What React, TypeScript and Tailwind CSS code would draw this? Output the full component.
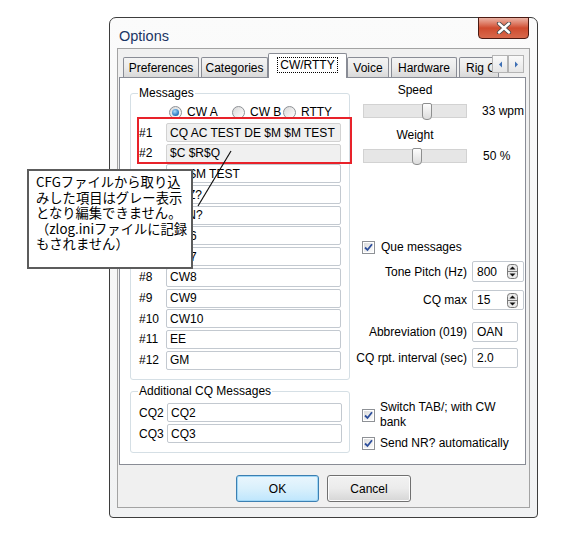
import React from "react";

const ui = "font-['Liberation_Sans',Arial,sans-serif]";
const jp = "font-['Noto_Sans_CJK_JP','Noto_Sans_CJK_SC',sans-serif]";

const messages = [
  "TU $M TEST",
  "QRZ?",
  "AGN?",
  "CW6",
  "CW7",
  "CW8",
  "CW9",
  "CW10",
  "EE",
  "GM",
];

function Tab({ label, w }: { label: string; w: string }) {
  return (
    <div
      className={`${w} h-[20px] shrink-0 border border-b-0 border-[#898c95] rounded-t-[2px] bg-gradient-to-b from-[#f4f4f4] via-[#ebebeb] to-[#d9d9d9] flex items-center justify-center leading-[14px] overflow-hidden whitespace-nowrap`}
    >
      {label}
    </div>
  );
}

function Field({ value, disabled }: { value: string; disabled?: boolean }) {
  return (
    <div
      className={`w-[175px] h-[19px] rounded-[2px] border pl-[3px] flex items-center leading-[14px] whitespace-nowrap overflow-hidden ${
        disabled ? "bg-[#f0f0f0] border-[#d2d2d2]" : "bg-white border-[#c3c9d0]"
      }`}
    >
      {value}
    </div>
  );
}

function MsgRow({ n, value, disabled }: { n: number; value: string; disabled?: boolean }) {
  return (
    <div className="flex items-center h-[19px]">
      <span className="w-[27px] leading-[14px]">#{n}</span>
      <Field value={value} disabled={disabled} />
    </div>
  );
}

function Radio({ checked, label, w }: { checked?: boolean; label: string; w: string }) {
  return (
    <div className={`${w} flex items-center gap-[5px] h-[14px]`}>
      <div className="w-[13px] h-[13px] rounded-full border border-[#8e9196] bg-gradient-to-br from-[#d9d9d9] to-[#ffffff] flex items-center justify-center">
        {checked && (
          <div className="w-[7px] h-[7px] rounded-full bg-[radial-gradient(circle_at_40%_35%,#a9dcfb,#2a78c0_65%,#17518c)]" />
        )}
      </div>
      <span className="leading-[14px]">{label}</span>
    </div>
  );
}

function Check() {
  return (
    <div className="w-[13px] h-[13px] shrink-0 border border-[#8e9196] bg-white p-[1px]">
      <div className="w-full h-full bg-gradient-to-br from-[#dcdcdc] to-[#fbfbfb] flex items-center justify-center">
        <svg width="9" height="9" viewBox="0 0 9 9">
          <path d="M1 4.5 L3.5 7 L8 1.2" fill="none" stroke="#2e4f9c" strokeWidth="1.8" />
        </svg>
      </div>
    </div>
  );
}

function Spin() {
  return (
    <svg width="11" height="15" viewBox="0 0 11 15">
      <rect x="0.5" y="0.5" width="10" height="14" rx="3" fill="#e9e9e9" stroke="#7a7a7a" />
      <line x1="1" y1="7.5" x2="10" y2="7.5" stroke="#7a7a7a" />
      <path d="M5.5 2.5 L8.5 5.5 L2.5 5.5 Z" fill="#111" />
      <path d="M2.5 9.5 L8.5 9.5 L5.5 12.5 Z" fill="#111" />
    </svg>
  );
}

function Slider({ thumb }: { thumb: string }) {
  return (
    <div className="relative ml-[7px] w-[104px] h-[14px] bg-[#e6e6e6] border border-[#d2d2d2]">
      <div
        className={`absolute ${thumb} -top-[2px] w-[10px] h-[17px] rounded-b-[4px] rounded-t-[2px] border border-[#8e8f8f] bg-gradient-to-b from-[#fdfdfd] to-[#dcdcdc]`}
      />
    </div>
  );
}

function LabeledInput({
  label,
  value,
  w,
  h,
  spin,
}: {
  label: string;
  value: string;
  w: string;
  h: string;
  spin?: boolean;
}) {
  return (
    <div className="flex items-center">
      <span className="w-[111px] text-right leading-[14px] whitespace-nowrap">{label}</span>
      <div
        className={`ml-[5px] ${w} ${h} bg-white border border-[#c3c9d0] rounded-[2px] pl-[4px] pr-[5px] flex items-center justify-between leading-[14px]`}
      >
        <span>{value}</span>
        {spin && <Spin />}
      </div>
    </div>
  );
}

function Window() {
  return (
    <div className="w-[429px] h-[501px] border border-[#3d3d3d] rounded-t-[7px] rounded-b-[4px] bg-gradient-to-b from-[#fbfbfb] to-[#f1f2f3] px-[7px] pb-[9px] flex flex-col">
      {/* Title bar */}
      <div className="h-[30px] flex items-start justify-between">
        <span className="mt-[10px] ml-[2px] text-[14.5px] leading-[17px] text-[#1b3565]">Options</span>
        <div className="-mt-[1px] mr-[1px] w-[51px] h-[22px] rounded-b-[4px] border border-[#4a1a12] bg-gradient-to-b from-[#eab2a4] via-[#cf4b2e] to-[#d8694c] flex items-center justify-center">
          <svg width="16" height="12" viewBox="0 0 16 12">
            <path d="M3 1.5 L13 10.5 M13 1.5 L3 10.5" stroke="#4b4b4b" strokeWidth="4.2" strokeLinecap="round" />
            <path d="M3 1.5 L13 10.5 M13 1.5 L3 10.5" stroke="#ffffff" strokeWidth="2.4" strokeLinecap="round" />
          </svg>
        </div>
      </div>

      {/* Client area */}
      <div className="h-[460px] border border-[#a3a3a3] bg-[#f0f0f0] flex flex-col">
        <div className="ml-[1px] mr-[3px] mt-[4px]">
          {/* Tabs */}
          <div className="relative z-10 h-[24px] flex items-end gap-[2px] pl-[4px]">
            <Tab label="Preferences" w="w-[76px]" />
            <Tab label="Categories" w="w-[67px]" />
            <div className="-mx-[2px] -mb-px w-[79px] h-[25px] shrink-0 border border-b-0 border-[#898c95] rounded-t-[2px] bg-white flex items-start justify-center pt-[4px]">
              <span className="px-[2px] leading-[14px] outline-1 outline-dotted outline-black">CW/RTTY</span>
            </div>
            <Tab label="Voice" w="w-[42px]" />
            <Tab label="Hardware" w="w-[66px]" />
            <div className="w-[40px] h-[20px] shrink-0 border border-b-0 border-[#898c95] rounded-t-[2px] bg-gradient-to-b from-[#f4f4f4] via-[#ebebeb] to-[#d9d9d9] flex items-center pl-[6px] leading-[14px] overflow-hidden whitespace-nowrap">
              Rig Control
            </div>
            <div className="absolute right-0 top-[2px] flex pr-[2px] bg-[#f0f0f0]">
              {[true, false].map((left) => (
                <div
                  key={String(left)}
                  className="w-[16px] h-[18px] border border-[#b4b4b4] bg-gradient-to-b from-[#fafafa] to-[#e6e6e6] flex items-center justify-center"
                >
                  <svg width="5" height="7" viewBox="0 0 5 7">
                    <path d={left ? "M4 0.5 L1 3.5 L4 6.5 Z" : "M1 0.5 L4 3.5 L1 6.5 Z"} fill="#3d6fb4" />
                  </svg>
                </div>
              ))}
            </div>
          </div>

          {/* Panel */}
          <div className="h-[388px] border border-[#898c95] bg-white flex">
            {/* Left column */}
            <div className="pl-[10px] pt-[8px] w-[230px] shrink-0 flex flex-col">
              <fieldset className="w-[220px] h-[294px] border border-[#d5dfe5] rounded-[3px] pl-[8px]">
                <legend className="-ml-[1px] px-[1px] leading-[14px]">Messages</legend>
                <div className="mt-[5px] ml-[30px] flex">
                  <Radio checked label="CW A" w="w-[63px]" />
                  <Radio label="CW B" w="w-[51px]" />
                  <Radio label="RTTY" w="w-[55px]" />
                </div>
                <div className="mt-[4px] flex flex-col gap-[1.7px]">
                  <div className="relative flex flex-col gap-[1.7px]">
                    <MsgRow n={1} value="CQ AC TEST DE $M $M TEST" disabled />
                    <MsgRow n={2} value="$C $R$Q" disabled />
                    <div className="absolute -left-[2px] -top-[6px] -right-[3px] -bottom-[1.5px] border-2 border-[#e8222a]" />
                  </div>
                  {messages.map((m, i) => (
                    <MsgRow key={i} n={i + 3} value={m} />
                  ))}
                </div>
              </fieldset>

              <fieldset className="mt-[4px] w-[220px] h-[69px] border border-[#d5dfe5] rounded-[3px] pl-[8px]">
                <legend className="-ml-[1px] px-[1px] leading-[14px]">Additional CQ Messages</legend>
                <div className="mt-[5px] flex flex-col gap-[2px]">
                  {["CQ2", "CQ3"].map((c) => (
                    <div key={c} className="flex items-center h-[19px]">
                      <span className="w-[28px] leading-[14px]">{c}</span>
                      <Field value={c} />
                    </div>
                  ))}
                </div>
              </fieldset>
            </div>

            {/* Right column */}
            <div className="pl-[6px] flex-1 flex flex-col">
              <div className="mt-[5px] ml-[7px] w-[104px] text-center leading-[14px]">Speed</div>
              <div className="mt-[5px] h-[17px] flex items-center">
                <Slider thumb="left-[58px]" />
                <span className="ml-[15px] leading-[14px]">33 wpm</span>
              </div>
              <div className="mt-[9px] ml-[7px] w-[104px] text-center leading-[14px]">Weight</div>
              <div className="mt-[5px] h-[17px] flex items-center">
                <Slider thumb="left-[48px]" />
                <span className="ml-[16px] leading-[14px]">50 %</span>
              </div>

              <div className="mt-[76px] ml-[6px] h-[14px] flex items-center gap-[6px]">
                <Check />
                <span className="leading-[14px]">Que messages</span>
              </div>

              <div className="mt-[7px] flex flex-col">
                <LabeledInput label="Tone Pitch (Hz)" value="800" w="w-[52px]" h="h-[21px]" spin />
                <div className="mt-[8px]">
                  <LabeledInput label="CQ max" value="15" w="w-[52px]" h="h-[20px]" spin />
                </div>
                <div className="mt-[12px]">
                  <LabeledInput label="Abbreviation (019)" value="OAN" w="w-[46px]" h="h-[20px]" />
                </div>
                <div className="mt-[6px]">
                  <LabeledInput label="CQ rpt. interval (sec)" value="2.0" w="w-[46px]" h="h-[20px]" />
                </div>
              </div>

              <div className="mt-[32px] ml-[6px] flex items-center gap-[5px]">
                <Check />
                <span className="w-[132px] leading-[15px]">Switch TAB/; with CW bank</span>
              </div>
              <div className="mt-[6px] ml-[6px] h-[15px] flex items-center gap-[5px]">
                <Check />
                <span className="leading-[15px] whitespace-nowrap">Send NR? automatically</span>
              </div>
            </div>
          </div>
        </div>

        {/* Buttons */}
        <div className="mt-[10px] flex justify-center gap-[8px]">
          <div className="w-[83px] h-[27px] rounded-[3px] border border-[#3c7fb1] bg-gradient-to-b from-[#eaf6fd] via-[#d9f0fc] to-[#bee6fd] shadow-[inset_0_0_0_1px_#9fd7f7] flex items-center justify-center leading-[14px]">
            OK
          </div>
          <div className="w-[84px] h-[27px] rounded-[3px] border border-[#707070] bg-gradient-to-b from-[#f2f2f2] via-[#ebebeb] to-[#d6d6d6] shadow-[inset_0_0_0_1px_#fcfcfc] flex items-center justify-center leading-[14px]">
            Cancel
          </div>
        </div>
      </div>
    </div>
  );
}

export default function App() {
  return (
    <div className={`relative w-[583px] h-[546px] bg-white overflow-hidden ${ui} text-[12px] text-black`}>
      <div className="pt-[17px] pl-[109px]">
        <Window />
      </div>

      {/* annotation */}
      <svg className="absolute left-0 top-0 pointer-events-none" width="583" height="546">
        <line x1="231" y1="151" x2="198" y2="206" stroke="#111" strokeWidth="1.2" />
      </svg>
      <div
        className={`absolute left-[27px] top-[169px] w-[166px] h-[100px] bg-white border-2 border-[#5c5c5c] pl-[7px] pt-[3px] ${jp} text-[13.3px] leading-[15.5px] text-black`}
      >
        <div>CFGファイルから取り込</div>
        <div>みした項目はグレー表示</div>
        <div>となり編集できません。</div>
        <div className="whitespace-nowrap">（zlog.iniファイルに記録</div>
        <div>もされません）</div>
      </div>
    </div>
  );
}
